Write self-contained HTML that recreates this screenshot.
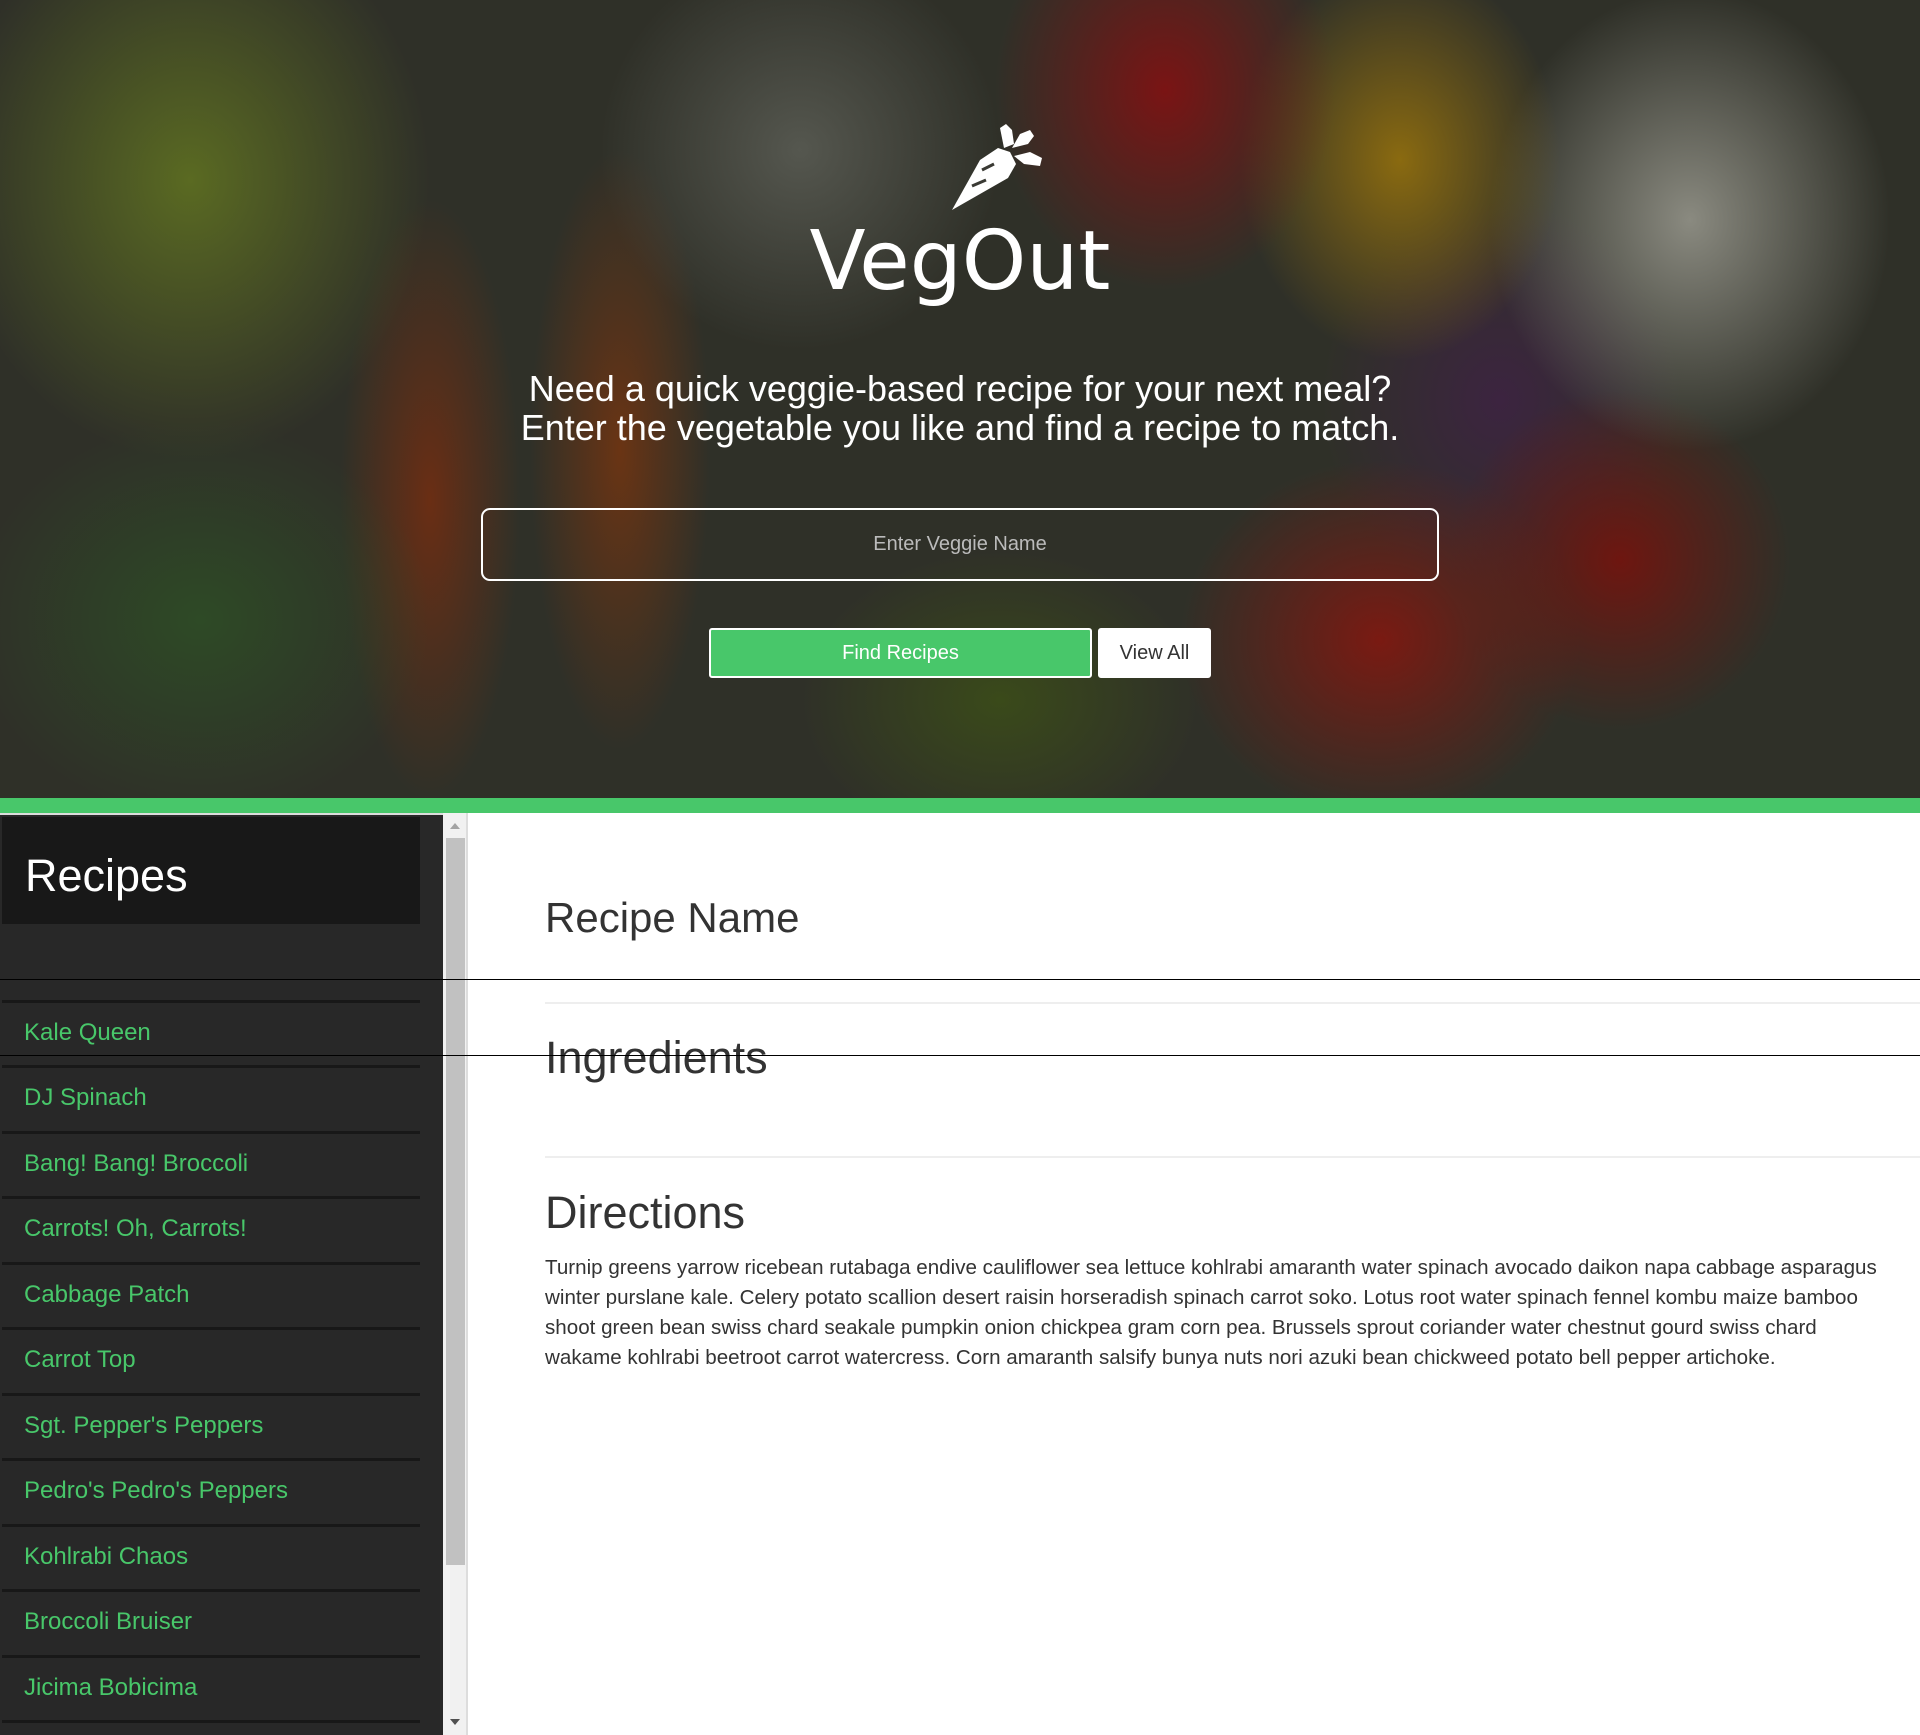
<!DOCTYPE html>
<html style="height:1735px;overflow:hidden"><head><meta charset="utf-8"><style>
*{margin:0;padding:0;box-sizing:border-box}
body{width:1920px;height:1735px;overflow:hidden;background:#fff;font-family:"Liberation Sans",Arial,sans-serif;position:relative}
.hero{position:absolute;left:0;top:0;width:1920px;height:798px;overflow:hidden;
background:
radial-gradient(ellipse 170px 200px at 1165px 90px,#7a1414 0%,rgba(122,20,20,0) 100%),
radial-gradient(ellipse 160px 200px at 1400px 160px,#8a6a10 0%,rgba(138,106,16,0) 100%),
radial-gradient(ellipse 200px 230px at 1690px 220px,#8a8a80 0%,rgba(138,138,128,0) 100%),
radial-gradient(ellipse 200px 180px at 1380px 640px,#7a1a12 0%,rgba(122,26,18,0) 100%),
radial-gradient(ellipse 170px 170px at 1620px 560px,#6e1610 0%,rgba(110,22,16,0) 100%),
radial-gradient(ellipse 180px 200px at 1500px 400px,#3c2440 0%,rgba(60,36,64,0) 100%),
radial-gradient(ellipse 200px 200px at 800px 150px,#55574f 0%,rgba(85,87,79,0) 100%),
radial-gradient(ellipse 240px 280px at 190px 180px,#5a6a22 0%,rgba(90,106,34,0) 100%),
radial-gradient(ellipse 230px 200px at 200px 620px,#2e4a26 0%,rgba(46,74,38,0) 100%),
radial-gradient(ellipse 90px 300px at 430px 500px,#6a2e14 0%,rgba(106,46,20,0) 100%),
radial-gradient(ellipse 90px 300px at 620px 450px,#6a3414 0%,rgba(106,52,20,0) 100%),
radial-gradient(ellipse 200px 150px at 1000px 700px,#3a4a1a 0%,rgba(58,74,26,0) 100%),
#2f3028}
.title{position:absolute;left:0;width:1920px;text-align:center;color:#fff}
.logo{top:214px;font-family:"Comic Sans MS","DejaVu Sans",cursive;font-size:82px;letter-spacing:0px}
.tag{top:369px;font-size:36px;line-height:39px}
.inp{position:absolute;left:481px;top:508px;width:958px;height:73px;border:2px solid #fff;border-radius:9px;color:#bbb;font-size:20px;text-align:center;line-height:69px}
.btn{position:absolute;top:628px;height:50px;border:2px solid #fff;border-radius:3px;font-size:20px;text-align:center;line-height:46px}
.band{position:absolute;left:0;top:798px;width:1920px;height:15px;background:#48c76a}
.side{position:absolute;left:0;top:813px;width:443px;height:922px;background:#282828;border-top:2px solid #ddd}
.rh{position:absolute;left:2px;top:2px;width:418px;height:107px;background:#181818;color:#fff;font-size:45px;padding:33px 0 0 23px}
.it{position:absolute;left:2px;width:418px;border-top:3px solid #181818;color:#48c76a;font-size:24px;padding:16px 0 0 22px;height:66px}
.sb{position:absolute;left:443px;top:813px;width:25px;height:922px;background:#f1f1f1;border-right:2px solid #ddd}
.th{position:absolute;left:3px;top:25px;width:19px;height:727px;background:#c1c1c1}
.hl{position:absolute;left:0;width:1920px;height:1px;background:#000}
.h{position:absolute;left:545px;color:#333;font-size:42px}
.rule{position:absolute;left:545px;width:1375px;height:2px;background:#eee}
.p{position:absolute;left:545px;top:1253px;width:1345px;font-size:20.6px;line-height:30px;color:#333}
</style></head><body>
<div class="hero">
<svg style="position:absolute;left:950px;top:118px" width="96" height="94" viewBox="0 0 96 94">
<g fill="#fff">
<path d="M2 92 L30 42 L48 30 L60 34 L66 46 L58 60 Z"/>
<path d="M54 30 L50 10 L56 6 L62 12 L64 26 Z"/>
<path d="M62 30 L70 16 L80 12 L84 18 L78 26 Z"/>
<path d="M64 38 L80 34 L92 40 L90 48 L74 46 Z"/>
</g>
<path d="M22 68 L36 62 M32 52 L44 46" stroke="#3a3a34" stroke-width="3"/>
</svg>
<div class="title logo">VegOut</div>
<div class="title tag">Need a quick veggie-based recipe for your next meal?<br>Enter the vegetable you like and find a recipe to match.</div>
<div class="inp">Enter Veggie Name</div>
<div class="btn" style="left:709px;width:383px;background:#48c76a;color:#fff">Find Recipes</div>
<div class="btn" style="left:1098px;width:113px;background:#fff;color:#333">View All</div>
</div>
<div class="band"></div>
<div class="side">
<div class="rh">Recipes</div>
<div class="it" style="top:185px">Kale Queen</div>
<div class="it" style="top:250px">DJ Spinach</div>
<div class="it" style="top:316px">Bang! Bang! Broccoli</div>
<div class="it" style="top:381px">Carrots! Oh, Carrots!</div>
<div class="it" style="top:447px">Cabbage Patch</div>
<div class="it" style="top:512px">Carrot Top</div>
<div class="it" style="top:578px">Sgt. Pepper's Peppers</div>
<div class="it" style="top:643px">Pedro's Pedro's Peppers</div>
<div class="it" style="top:709px">Kohlrabi Chaos</div>
<div class="it" style="top:774px">Broccoli Bruiser</div>
<div class="it" style="top:840px">Jicima Bobicima</div>
<div class="it" style="top:905px"></div>
</div>
<div class="sb"><div style="position:absolute;left:7px;top:10px;border:5px solid transparent;border-bottom:6px solid #a3a3a3;border-top:0"></div><div class="th"></div><div style="position:absolute;left:7px;top:906px;border:5px solid transparent;border-top:6px solid #505050;border-bottom:0"></div></div>
<div class="h" style="top:894px">Recipe Name</div>
<div class="rule" style="top:1002px"></div>
<div class="h" style="top:1032px;font-size:45px">Ingredients</div>
<div class="rule" style="top:1156px"></div>
<div class="h" style="top:1187px;font-size:45px">Directions</div>
<div class="p">Turnip greens yarrow ricebean rutabaga endive cauliflower sea lettuce kohlrabi amaranth water spinach avocado daikon napa cabbage asparagus winter purslane kale. Celery potato scallion desert raisin horseradish spinach carrot soko. Lotus root water spinach fennel kombu maize bamboo shoot green bean swiss chard seakale pumpkin onion chickpea gram corn pea. Brussels sprout coriander water chestnut gourd swiss chard wakame kohlrabi beetroot carrot watercress. Corn amaranth salsify bunya nuts nori azuki bean chickweed potato bell pepper artichoke.</div>
<div class="hl" style="top:979px"></div>
<div class="hl" style="top:1055px"></div>
</body></html>
